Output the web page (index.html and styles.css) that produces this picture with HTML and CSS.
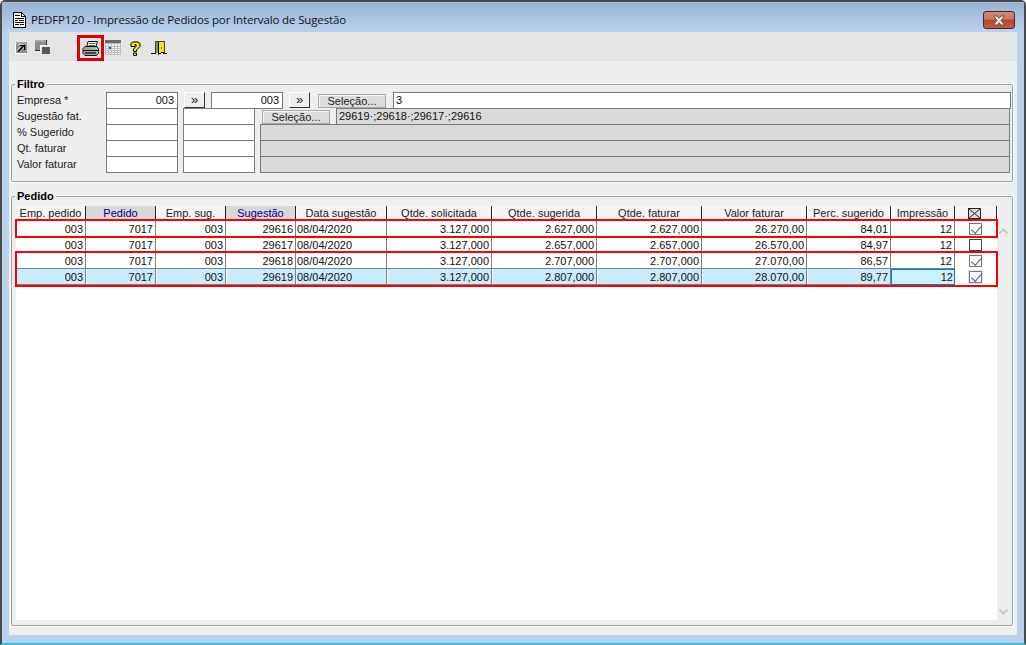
FILE: index.html
```html
<!DOCTYPE html>
<html lang="pt">
<head>
<meta charset="utf-8">
<title>PEDFP120</title>
<link rel="stylesheet" href="styles.css">
</head>
<body>
<div class="window">
  <header class="titlebar">
    <svg class="doc" width="13" height="16" viewBox="0 0 13 16" shape-rendering="crispEdges"><path d="M.5.5h8l4 4v11H.5z" fill="#fff" stroke="#000"/><path d="M8.500.5v4h4" fill="none" stroke="#000"/><path d="M2 3h5v1H2zM2 6h9v1H2zM2 8h3v1H2zM6 8h5v1H6zM2 10h9v1H2zM2 12h4v1H2zM7 12h4v1H7z" fill="#000"/></svg>
    <span class="title">PEDFP120 - Impressão de Pedidos por Intervalo de Sugestão</span>
    <button class="close" aria-label="Fechar"><svg width="14" height="11" viewBox="0 0 14 11"><path d="M1.500 1H5l2 2.400L9 1h3.500L9 5.500l3.500 4.500H9L7 7.600 5 10H1.500L5 5.500z" fill="#f4f4f4" stroke="#5a5050" stroke-width="1"/></svg></button>
  </header>
  <div class="client">
    <nav class="toolbar">
      <span class="tool t1"><svg width="12" height="12" viewBox="0 0 12 12"><path d="M0 1h11v11H0z" fill="#fff"/><path d="M1 0h11v11H1z" fill="#8e8e8e"/><path d="M1 0h11v3H1z" fill="#a4a4a4"/><path d="M3 9.500L8.500 4M5 3.500h4.500V8" fill="none" stroke="#fff" stroke-width="1" transform="translate(-1 -1)"/><path d="M3 9.500L8.500 4M5 3.500h4.500V8" fill="none" stroke="#000" stroke-width="1.400"/></svg></span>
      <span class="tool t2"><svg width="16" height="15" viewBox="0 0 16 15" shape-rendering="crispEdges"><path d="M0 0h11v10H0z" fill="#8c8c8c"/><path d="M0 0h11v2H0z" fill="#a6a6a6"/><path d="M5 5h11v10H5z" fill="#e8e8e8"/><path d="M0 10h5v1H0zM11 0h1v5h-1z" fill="#303030"/><path d="M5 5h1v5H5zM5 5h7v1H5z" fill="#fff"/><path d="M7 7h8v7H7z" fill="#585858"/></svg></span>
      <span class="tool print"><svg width="17" height="15" viewBox="0 0 17 15"><path d="M6 .5h9.500L13.500 7h-9z" fill="#f4f4f4" stroke="#111"/><path d="M7 2.500h6.500M6.500 4.500h6.500" stroke="#666"/><path d="M1 7.500l2-2h12l1.500 2v5l-2 2H3l-2-2z" fill="#a8a8a8" stroke="#111"/><path d="M1.500 9.500h14.500" stroke="#111"/><path d="M3 12h11" stroke="#444" stroke-width="2"/><path d="M11.500 7.500h3" stroke="#e0c840"/></svg></span>
      <span class="tool cal"><svg width="16" height="15" viewBox="0 0 16 15" shape-rendering="crispEdges"><path d="M0 0h16v15H0z" fill="#bcbcbc"/><path d="M0 0h16v3H0z" fill="#6c6c6c"/><path d="M1 4h14v10H1z" fill="#f4f4f4"/><path d="M3.500 4v10M6.500 4v10M9.500 4v10M12.500 4v10M1 6.500h14M1 8.500h14M1 10.500h14M1 12.500h14" stroke="#bcbcbc" fill="none"/><path d="M4 7h2v2H4z" fill="#1060a0"/></svg></span>
      <span class="tool help"><svg width="11" height="15" viewBox="0 0 11 15"><path d="M1 5.500V2.500L2.500 1h5.500l2 1.500v3L8 7.500 6.500 9v1.500h-3V8L6 5.500V3.500H5V5.500z" fill="#f6e800" stroke="#000"/><path d="M3.500 12h3v2.500h-3z" fill="#f6e800" stroke="#000"/></svg></span>
      <span class="tool door"><svg width="16" height="15" viewBox="0 0 16 15" shape-rendering="crispEdges"><path d="M0 12h5v1H0zM12 12h4v1h-4z" fill="#000"/><path d="M4 0h10v12h-1V1H5v11H4z" fill="#444"/><path d="M5 1h2v11H5z" fill="#8a8a8a"/><path d="M7 1h6v10l-6 3z" fill="#f2e400"/><path d="M7 1h1v13H7zM8 13h2v-1H8zM10 12h3v-1h-3z" fill="#000"/><path d="M10 6h1v2h-1z" fill="#776"/></svg></span>
    </nav>
    <main class="body">
      <fieldset class="group filtro">
        <legend>Filtro</legend>
        <div class="frow">
          <label class="lbl">Empresa *</label>
          <div class="inp w72 num">003</div>
          <button class="arrow">»</button>
          <div class="inp w72 num s2">003</div>
          <button class="arrow">»</button>
          <button class="sel s1">Seleção...</button>
          <div class="inp grow txt s3">3</div>
        </div>
        <div class="frow">
          <label class="lbl">Sugestão fat.</label>
          <div class="inp w72"></div>
          <div class="inp w72 s4"></div>
          <button class="sel s5">Seleção...</button>
          <div class="inp grow dis txt s6">29619·;29618·;29617·;29616</div>
        </div>
        <div class="frow">
          <label class="lbl">% Sugerido</label>
          <div class="inp w72"></div>
          <div class="inp w72 s4"></div>
          <div class="inp grow dis s7"></div>
        </div>
        <div class="frow">
          <label class="lbl">Qt. faturar</label>
          <div class="inp w72"></div>
          <div class="inp w72 s4"></div>
          <div class="inp grow dis s7"></div>
        </div>
        <div class="frow">
          <label class="lbl">Valor faturar</label>
          <div class="inp w72"></div>
          <div class="inp w72 s4"></div>
          <div class="inp grow dis s7"></div>
        </div>
      </fieldset>
      <fieldset class="group pedido">
        <legend>Pedido</legend>
        <div class="gridwrap">
          <div class="grid">
            <div class="row head">
              <span>Emp. pedido</span><span class="sorted">Pedido</span><span>Emp. sug.</span><span class="sorted">Sugestão</span><span>Data sugestão</span><span>Qtde. solicitada</span><span>Qtde. sugerida</span><span>Qtde. faturar</span><span>Valor faturar</span><span>Perc. sugerido</span><span>Impressão</span>
              <span class="chk"><svg width="13" height="11" viewBox="0 0 13 11" shape-rendering="crispEdges"><path d="M.5.5h12v10H.5z" fill="#ddd" stroke="#222"/><path d="M1 1l11 9M12 1L1 10" stroke="#222" shape-rendering="auto"/></svg></span>
            </div>
            <div class="row"><span>003</span><span>7017</span><span>003</span><span>29616</span><span class="l">08/04/2020</span><span>3.127,000</span><span>2.627,000</span><span>2.627,000</span><span>26.270,00</span><span>84,01</span><span>12</span><span class="chk"><i class="box on"></i></span></div>
            <div class="row"><span>003</span><span>7017</span><span>003</span><span>29617</span><span class="l">08/04/2020</span><span>3.127,000</span><span>2.657,000</span><span>2.657,000</span><span>26.570,00</span><span>84,97</span><span>12</span><span class="chk"><i class="box"></i></span></div>
            <div class="row"><span>003</span><span>7017</span><span>003</span><span>29618</span><span class="l">08/04/2020</span><span>3.127,000</span><span>2.707,000</span><span>2.707,000</span><span>27.070,00</span><span>86,57</span><span>12</span><span class="chk"><i class="box on"></i></span></div>
            <div class="row cur"><span>003</span><span>7017</span><span>003</span><span>29619</span><span class="l">08/04/2020</span><span>3.127,000</span><span>2.807,000</span><span>2.807,000</span><span>28.070,00</span><span>89,77</span><span class="focus">12</span><span class="chk"><i class="box on"></i></span></div>
            <div class="mark m1"></div>
            <div class="mark m2"></div>
          </div>
          <div class="scroll">
            <svg width="9" height="6" viewBox="0 0 9 6"><path d="M.5 5.500l4-4 4 4" fill="none" stroke="#c4c4c4" stroke-width="2"/></svg>
            <svg width="9" height="6" viewBox="0 0 9 6"><path d="M.5.500l4 4 4-4" fill="none" stroke="#c4c4c4" stroke-width="2"/></svg>
          </div>
        </div>
      </fieldset>
    </main>
  </div>
</div>
</body>
</html>
```
FILE: styles.css
```css
* { box-sizing: border-box; }
html, body { margin: 0; height: 100%; background: #fff; overflow: hidden; }
body { font: 11px "Liberation Sans", Arial, sans-serif; color: #111; }
.window {
  width: 1026px; height: 645px;
  border: solid #4a4a4a; border-width: 2px 2px 0 2px;
  border-radius: 5px 5px 0 0;
  background: #b9d1ea;
  display: flex; flex-direction: column;
  padding: 1px 7px 8px 7px;
  border-bottom: 2px solid #3fc0dc;
}
.titlebar {
  margin: -1px -7px 0 -7px; height: 30px;
  padding: 7px 9px 0 11px;
  background: linear-gradient(#98b4d2, #b9d2ec);
  display: flex; align-items: flex-start; flex: none;
  border-top: 1px solid #a8c0da;
}
.doc { margin: 2px 5px 0 0; }
.title { font: 11.5px "Open Sans", sans-serif; letter-spacing: -.14px; line-height: 16px; color: #111; margin-top: 2px; white-space: nowrap; }
.close {
  margin: 1px 0 0 auto; width: 32px; height: 18px; padding: 0;
  border: 1px solid #4c2430; border-radius: 3px;
  background: linear-gradient(#cf8a78 0, #c77868 45%, #b8442c 50%, #c85a3c 100%);
  display: flex; align-items: center; justify-content: center;
}
.client { flex: 1; display: flex; flex-direction: column; background: #eee; min-height: 0; }
.toolbar { height: 29px; background: #e4e4e4; display: flex; align-items: flex-start; flex: none; }
.tool { display: block; flex: none; height: 15px; line-height: 0; }
.t1 { margin: 10px 0 0 6px; }
.t2 { margin: 8px 0 0 8px; }
.print { margin: 3px 0 0 26px; width: 27px; height: 26px; border: 3px solid #e00000; padding: 3px 0 0 2px; }
.cal { margin: 8px 0 0 1px; }
.help { margin: 9px 0 0 9px; }
.door { margin: 9px 0 0 10px; }
.body { flex: 1; display: flex; flex-direction: column; padding: 16px 4px 9px 2px; min-height: 0; }
.group {
  margin: 0; padding: 0; min-width: 0;
  border: 1px solid #a0a0a0; border-radius: 2px;
  box-shadow: 0 0 0 1px #fafafa;
}
.group legend { font-weight: 700; font-size: 11px; line-height: 14px; padding: 0 2px; background: #eee; color: #000; }
.filtro { height: 105px; padding: 1px 2px 0 5px; flex: none; }
.filtro legend { margin-left: -2px; }
.pedido { flex: 1; margin-top: 7px; padding: 2px 2px 6px 4px; min-height: 0; display: block; }
.pedido legend { margin-left: -1px; }
.frow { display: flex; height: 16px; align-items: flex-start; }
.lbl { width: 89px; flex: none; line-height: 17px; color: #222; }
.inp {
  height: 17px; border: 1px solid #7a7a7a; background: #fff; flex: none;
  line-height: 15px; padding: 0 2px; white-space: nowrap; color: #111;
}
.w72 { width: 72px; }
.num { text-align: right; padding-right: 3px; }
.grow { flex: 1; min-width: 0; }
.txt { padding-left: 2px; }
.dis { background: #dadada; }
.s2 { margin-left: 6px; }
.s3 { margin-left: 7px; margin-right: -1px; }
.s4 { margin-left: 5px; }
.s5 { margin-left: 7px; margin-top: 2px; width: 68px; height: 14px; }
.s6 { margin-left: 6px; }
.s7 { margin-left: 5px; }
.arrow {
  width: 21px; height: 16px; margin-left: 6px; padding: 0; flex: none;
  font: 13px/12px "Liberation Sans", sans-serif; color: #222;
  background: #eee; border: 1px solid; border-color: #fff #333 #333 #fff;
}
.sel {
  font: 11px/12px "Liberation Sans", sans-serif; color: #222; padding: 0; flex: none;
  background: #dcdcdc; border: 1px solid #a8a8a8; box-shadow: inset 1px 1px 0 #f4f4f4;
}
.s1 { margin-left: 8px; margin-top: 2px; width: 68px; height: 14px; }
.gridwrap { display: flex; height: 100%; margin-top: 1px; }
.grid { position: relative; width: 981px; background: #fff; flex: none; height: 100%; }
.row {
  display: grid; height: 16px;
  grid-template-columns: 70px 70px 70px 70px 91px 105px 105px 105px 105px 84px 64px 42px;
}
.row span {
  border-right: 1px solid #808080; border-bottom: 1px solid #808080;
  text-align: right; padding: 0 2px 0 0; line-height: 17px; overflow: hidden; white-space: nowrap; color: #111;
}
.row span.l { text-align: left; padding-left: 1px; }
.row span.chk { border: 0; display: flex; justify-content: center; align-items: flex-start; padding: 2px 2px 0 0; background: #fff; }
.head { height: 15px; background: #f4f4f4; }
.head span { text-align: center; padding: 0; border: 0; border-right: 1px solid #222; box-shadow: 1px 0 0 #fff; line-height: 14px; color: #222; }
.row.head span.chk { background: #f4f4f4; border-right: 1px solid #222; padding: 2px 2px 0 0; }
.head span.sorted { background: #d8d8d8; color: #000080; }
.cur span { background: #c8ecfd; box-shadow: inset 1px 0 0 #f0faff; }
.cur span.focus { background: #c6f4ff; border: 1px solid #1078d0; box-shadow: none; padding-right: 1px; line-height: 15px; }
.box { display: block; width: 13px; height: 12px; border: 1px solid #444; background: #fff; position: relative; }
.box.on { border-color: #777; }
.box.on::after {
  content: ""; position: absolute; left: 3px; top: 0; width: 5px; height: 8px;
  border: solid #666; border-width: 0 1.5px 1.5px 0; transform: rotate(40deg);
}
.cur .box { background: #f0fbff; box-shadow: 0 0 0 1px #c8ecfd; }
.mark { position: absolute; left: -1px; right: -1px; border: 2px solid #f00; }
.m1 { top: 13px; height: 19px; }
.m2 { top: 45px; height: 36px; }
.scroll { flex: 1; display: flex; flex-direction: column; justify-content: space-between; align-items: center; padding: 22px 0 5px; }
```
